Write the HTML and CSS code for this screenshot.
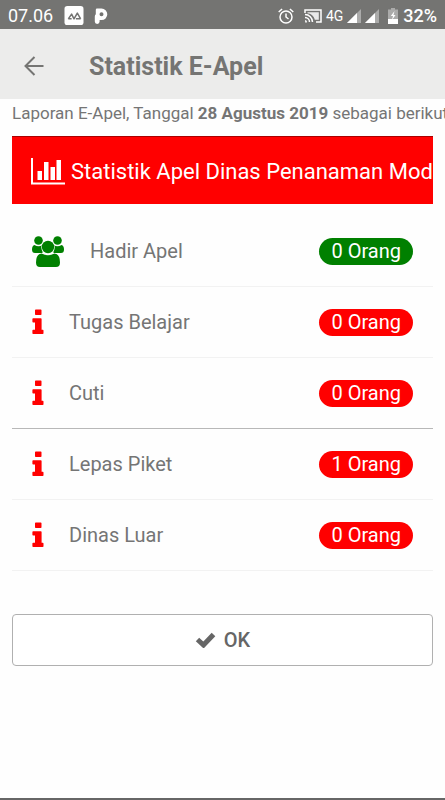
FILE: index.html
```html
<!DOCTYPE html>
<html lang="id">
<head>
    <meta charset="UTF-8">
    <meta name="viewport" content="width=device-width, initial-scale=1.0">
    <title>Statistik E-Apel</title>
    <link rel="stylesheet" href="styles.css">
</head>
<body>
    <svg class="simbol" aria-hidden="true">
        <symbol id="info" viewBox="0 0 12 26">
            <path d="M3 1.300Q3 .5 3.800.5h4.900Q9.500.5 9.500 1.300v4Q9.500 6 8.700 6H3.800Q3 6 3 5.300zM1.200 9.200h7.600q.8 0 .8.800v10.700h1.100q.8 0 .8.800v2.700q0 .8-.8.800H1.200q-.8 0-.8-.8v-2.700q0-.8.8-.8H3V13.500H1.200q-.8 0-.8-.8V10q0-.8.800-.8z"/>
        </symbol>
        <symbol id="sinyal" viewBox="0 0 14 14">
            <path d="M14 0v14H0z" opacity=".4"/>
            <path d="M10 4v10H0z"/>
        </symbol>
    </svg>

    <div class="status-bar">
        <span class="jam">07.06</span>
        <svg class="ikon-galeri" viewBox="0 0 20 20">
            <rect x="0" y="0" width="20" height="20" rx="3" fill="#fff"/>
            <path d="M4 13.500l3.500-5 2.500 5 3.500-6 3.500 6M4 13.500h3.500M12 13.500h5" fill="none" stroke="#747472" stroke-width="1.600" stroke-linejoin="round"/>
        </svg>
        <svg class="ikon-p" viewBox="0 0 14 16">
            <path fill-rule="evenodd" d="M3 .5H7.500a5.800 5.800 0 0 1 0 11.600H5.600v1.400A2.400 2.400 0 0 1 .8 13.500V8.500A3 3 0 0 1 1.800 6.200V1.700Q1.800.5 3 .5zM7.500 4.200a2 2 0 1 0 0 4 2 2 0 1 0 0-4z" fill="#fff"/>
        </svg>
        <div class="status-kanan">
            <svg class="ikon-alarm" viewBox="0 0 16 16">
                <g fill="none" stroke="#fff" stroke-width="1.500">
                    <circle cx="8" cy="9" r="6"/>
                    <path d="M8 5.500V9l2.500 2M.7 4l3.400-3M15.300 4l-3.400-3"/>
                </g>
            </svg>
            <svg class="ikon-cast" viewBox="0 0 18 14">
                <path d="M1 4V1h16v12h-5M1 5.500A7.500 7.500 0 0 1 8.500 13M1 8.500A4.500 4.500 0 0 1 5.500 13" fill="none" stroke="#fff" stroke-width="1.500"/>
                <path d="M3.500 3.200h11.300v7.600h-4C10 7 7 4.500 3.500 4.200zM1 11a2 2 0 0 1 2 2.500H1z" fill="#fff" opacity=".85"/>
            </svg>
            <span class="jaringan">4G</span>
            <svg class="ikon-sinyal"><use href="#sinyal"/></svg>
            <svg class="ikon-sinyal"><use href="#sinyal"/></svg>
            <svg class="ikon-baterai" viewBox="0 0 10 16">
                <path d="M3 0h4v1.500h3V11H0V1.500h3z" fill="#fff" opacity=".4"/>
                <path d="M0 11h10v5H0z" fill="#fff"/>
                <path d="M6.500 3L2.800 8H5l-1 4L7.500 7H5.500z" fill="#fff"/>
            </svg>
            <span class="persen">32%</span>
        </div>
    </div>

    <header class="header">
        <button type="button" class="kembali" aria-label="Kembali">
            <svg viewBox="0 0 20 20"><path d="M19.500 10H1.500M10.500 1L1.500 10l9 9" fill="none" stroke="#757573" stroke-width="2"/></svg>
        </button>
        <h1>Statistik E-Apel</h1>
    </header>

    <main class="konten">
        <p class="laporan">Laporan E-Apel, Tanggal <b>28 Agustus 2019</b> sebagai berikut :</p>

        <section class="kartu">
            <h2 class="judul">
                <svg viewBox="0 0 34 27">
                    <path d="M1 0v25.500h33" fill="none" stroke="#fff" stroke-width="2"/>
                    <path d="M6.500 13h4.500v9H6.500zM13 4h4.500v18H13zM19.500 9H24v13h-4.500zM25.500 2H30v20h-4.500z" fill="#fff"/>
                </svg>
                <span>Statistik Apel Dinas Penanaman Modal</span>
            </h2>
            <ul class="daftar">
                <li class="baris hadir">
                    <svg class="ikon-orang" viewBox="0 0 32 31">
                        <circle cx="6.500" cy="4.500" r="4.300"/>
                        <circle cx="25.500" cy="4.500" r="4.300"/>
                        <path d="M2.500 9q4 2.500 8 0V17H3q-3 0-3-3.500Q0 9.500 2.500 9zM29.500 9q-4 2.500-8 0V17H29q3 0 3-3.500 0-4-2.500-4.500z"/>
                        <circle cx="16" cy="11" r="6.800" fill="#fefefe"/>
                        <circle cx="16" cy="11" r="6.200"/>
                        <path d="M9.500 17.500q6.500 3.500 13 0Q28 18 28 26.500q0 4.500-4 4.500H8q-4 0-4-4.500 0-8.500 5.500-9z"/>
                    </svg>
                    <span class="nama">Hadir Apel</span>
                    <span class="badge">0 Orang</span>
                </li>
                <li class="baris">
                    <svg class="ikon-info"><use href="#info"/></svg>
                    <span class="nama">Tugas Belajar</span>
                    <span class="badge">0 Orang</span>
                </li>
                <li class="baris garis-tebal">
                    <svg class="ikon-info"><use href="#info"/></svg>
                    <span class="nama">Cuti</span>
                    <span class="badge">0 Orang</span>
                </li>
                <li class="baris">
                    <svg class="ikon-info"><use href="#info"/></svg>
                    <span class="nama">Lepas Piket</span>
                    <span class="badge">1 Orang</span>
                </li>
                <li class="baris">
                    <svg class="ikon-info"><use href="#info"/></svg>
                    <span class="nama">Dinas Luar</span>
                    <span class="badge">0 Orang</span>
                </li>
            </ul>
        </section>

        <button type="button" class="tombol-ok">
            <svg viewBox="0 0 21 16"><path d="M2.500 7.500l6 5.500L18.500 2.500" fill="none" stroke="#666" stroke-width="5"/></svg>
            OK
        </button>
    </main>
</body>
</html>
```

FILE: styles.css
```css
* {
    box-sizing: border-box;
}
body {
    margin: 0;
    min-height: 100vh;
    font-family: Roboto, "Liberation Sans", sans-serif;
    color: #757575;
    background-color: #fefefe;
    border-bottom: 2px solid #666;
    overflow-x: hidden;
}
h1, h2, p, ul {
    margin: 0;
    padding: 0;
}
svg {
    display: block;
    flex: none;
}
button {
    font-family: inherit;
    cursor: pointer;
}
.simbol {
    width: 0;
    height: 0;
    position: absolute;
}

/* Status bar */
.status-bar {
    display: flex;
    align-items: center;
    height: 29px;
    padding: 2px 8px 0;
    background-color: #747472;
    color: #fff;
    fill: #fff;
    font-size: 18px;
}
.ikon-galeri {
    width: 20px;
    height: 19px;
    margin-left: 11px;
}
.ikon-p {
    width: 14px;
    height: 16px;
    margin-left: 10px;
}
.status-kanan {
    display: flex;
    align-items: center;
    margin-left: auto;
}
.ikon-alarm {
    width: 16px;
    height: 16px;
    margin-right: 10px;
}
.ikon-cast {
    width: 18px;
    height: 14px;
    margin-right: 4px;
}
.jaringan {
    font-size: 14px;
    margin-right: 4px;
}
.ikon-sinyal {
    width: 14px;
    height: 14px;
    margin-right: 4px;
}
.ikon-baterai {
    width: 10px;
    height: 16px;
    margin: 0 5px;
}
.persen {
    font-weight: 500;
}

/* Header */
.header {
    display: flex;
    align-items: center;
    height: 70px;
    padding: 4px 24px 0;
    background-color: #ececeb;
}
.kembali {
    padding: 0;
    border: 0;
    background: none;
    margin-right: 45px;
}
.kembali svg {
    width: 20px;
    height: 20px;
}
.header h1 {
    font-size: 25px;
    font-weight: 700;
    color: #757573;
}

/* Konten */
.konten {
    padding: 0 12px;
}
.laporan {
    padding: 2px 0 11px;
    font-size: 17px;
    line-height: 24px;
    white-space: nowrap;
}
.judul {
    display: flex;
    align-items: center;
    height: 68px;
    padding: 1px 0 0 19px;
    background-color: #f00;
    border-top: 1px solid #a00;
    color: #fff;
    font-size: 22px;
    font-weight: 400;
    white-space: nowrap;
    overflow: hidden;
}
.judul svg {
    width: 34px;
    height: 27px;
    margin-right: 6px;
}
.daftar {
    list-style: none;
}
.baris {
    display: flex;
    align-items: center;
    height: 71px;
    padding: 0 20px;
    border-bottom: 1px solid #f2f2f2;
    font-size: 20px;
}
.hadir {
    height: 83px;
    padding-top: 12px;
}
.garis-tebal {
    border-bottom-color: #b8b8b8;
}
.ikon-orang {
    width: 32px;
    height: 31px;
    margin-right: 26px;
    fill: #008000;
}
.ikon-info {
    width: 12px;
    height: 26px;
    margin-right: 25px;
    fill: #f00;
}
.nama {
    flex: 1;
}
.badge {
    padding: 0 12px;
    border-radius: 14px;
    background-color: #f00;
    color: #fff;
    line-height: 27px;
}
.hadir .badge {
    background-color: #008000;
}
.tombol-ok {
    display: flex;
    align-items: center;
    justify-content: center;
    gap: 8px;
    width: 100%;
    height: 52px;
    margin-top: 43px;
    border: 1px solid #b0b0b0;
    border-radius: 4px;
    background-color: #fff;
    color: #666;
    font-size: 20px;
    font-weight: 500;
}
.tombol-ok svg {
    width: 21px;
    height: 16px;
}
```
